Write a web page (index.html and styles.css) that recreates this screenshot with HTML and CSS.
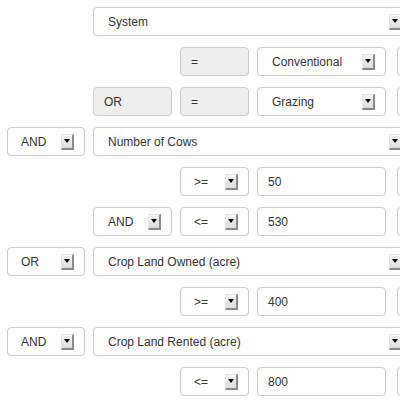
FILE: index.html
```html
<!DOCTYPE html>
<html>
<head>
<meta charset="utf-8">
<link rel="stylesheet" href="styles.css">
</head>
<body>
<div class="grid">
  <!-- row 1 -->
  <div class="box sel c2 wide"><span>System</span><i class="btn"></i></div>
  <!-- row 2 -->
  <div class="box dis c3"><span>=</span></div>
  <div class="box sel c4"><span>Conventional</span><i class="btn"></i></div>
  <div class="box c5"></div>
  <!-- row 3 -->
  <div class="box dis c2"><span>OR</span></div>
  <div class="box dis c3"><span>=</span></div>
  <div class="box sel c4"><span>Grazing</span><i class="btn"></i></div>
  <div class="box c5"></div>
  <!-- row 4 -->
  <div class="box sel c1"><span>AND</span><i class="btn"></i></div>
  <div class="box sel c2 wide"><span>Number of Cows</span><i class="btn"></i></div>
  <!-- row 5 -->
  <div class="box sel c3"><span>&gt;=</span><i class="btn"></i></div>
  <div class="box inp c4"><span>50</span></div>
  <div class="box c5"></div>
  <!-- row 6 -->
  <div class="box sel c2"><span>AND</span><i class="btn"></i></div>
  <div class="box sel c3"><span>&lt;=</span><i class="btn"></i></div>
  <div class="box inp c4"><span>530</span></div>
  <div class="box c5"></div>
  <!-- row 7 -->
  <div class="box sel c1"><span>OR</span><i class="btn"></i></div>
  <div class="box sel c2 wide"><span>Crop Land Owned (acre)</span><i class="btn"></i></div>
  <!-- row 8 -->
  <div class="box sel c3"><span>&gt;=</span><i class="btn"></i></div>
  <div class="box inp c4"><span>400</span></div>
  <div class="box c5"></div>
  <!-- row 9 -->
  <div class="box sel c1"><span>AND</span><i class="btn"></i></div>
  <div class="box sel c2 wide"><span>Crop Land Rented (acre)</span><i class="btn"></i></div>
  <!-- row 10 -->
  <div class="box sel c3"><span>&lt;=</span><i class="btn"></i></div>
  <div class="box inp c4"><span>800</span></div>
  <div class="box c5"></div>
</div>
</body>
</html>
```
FILE: styles.css
```css
html, body {
  margin: 0;
  padding: 0;
  overflow: hidden;
  background: #fff;
}
body {
  font-family: "Liberation Sans", Arial, Helvetica, sans-serif;
  font-size: 12px;
  color: #333;
}
.grid {
  display: grid;
  grid-template-columns: 78px 79px 69px 129px 60px;
  grid-auto-rows: 29px;
  column-gap: 8px;
  row-gap: 11px;
  padding: 7px 0 0 7px;
  width: 520px;
}
.box {
  box-sizing: border-box;
  height: 29px;
  border: 1px solid #cccccc;
  border-radius: 4px;
  background: #fff;
  display: flex;
  align-items: center;
  padding: 0 10px;
}
.c1 { grid-column: 1; }
.c2 { grid-column: 2; }
.c3 { grid-column: 3; }
.c4 { grid-column: 4; }
.c5 { grid-column: 5; margin-left: 3px; }
.wide { grid-column: 2 / 6; width: 320px; }
.sel { padding: 0 10px 0 13px; }
.sel.c2 { padding-left: 14px; }
.sel.c3 { padding-left: 13px; }
.sel.c4 { padding-left: 14px; }
.dis { background: #eeeeee; }
.btn {
  margin-left: auto;
  box-sizing: border-box;
  width: 13px;
  height: 16px;
  background: linear-gradient(#f7f7f7, #dcdcdc);
  border-top: 1px solid #e4e4e4;
  border-left: 1px solid #e4e4e4;
  border-right: 2px solid #8a8a8a;
  border-bottom: 2px solid #8a8a8a;
  display: flex;
  align-items: center;
  justify-content: center;
}
.btn::after {
  content: "";
  width: 0;
  height: 0;
  border-left: 3.5px solid transparent;
  border-right: 3.5px solid transparent;
  border-top: 4px solid #000;
}
```
